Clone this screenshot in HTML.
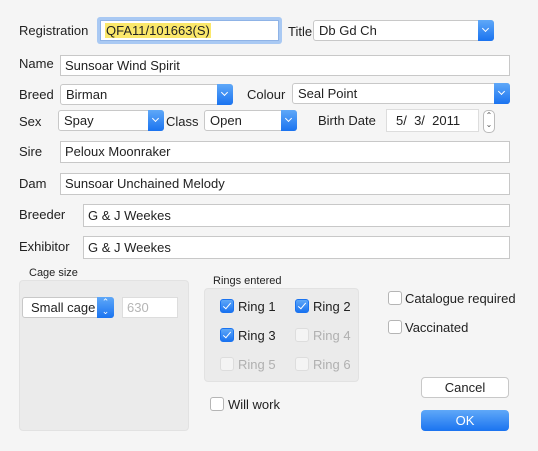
<!DOCTYPE html>
<html><head><style>
body{margin:0;width:538px;height:451px;background:#f5f5f5;font-family:"Liberation Sans",sans-serif;font-size:13px;color:#222;position:relative;overflow:hidden}
.a{position:absolute}
.l{position:absolute;line-height:16px}
.f{position:absolute;background:#fff;border:1px solid #c8c8c8;box-sizing:border-box;padding-left:4px;line-height:19px}
.s{position:absolute;background:#fff;border:1px solid #c8c8c8;border-radius:3px;box-sizing:border-box;padding-left:5px;line-height:20px}
.s .b{position:absolute;right:-1px;top:-1px;bottom:-1px;width:16px;background:linear-gradient(#5fa8f8,#1a73f0);border-radius:0 3px 3px 0}
.s .b.c:after{content:"";position:absolute;left:5px;top:6px;width:4px;height:4px;border-right:1.3px solid #fff;border-bottom:1.3px solid #fff;transform:rotate(45deg)}
.cb{position:absolute;width:14px;height:14px;border:1px solid #b5b5b5;border-radius:3px;background:#fff;box-sizing:border-box}
.cb.on{background:linear-gradient(#5fa8f8,#1a73f0);border-color:#1a73f0}
.cb.on:after{content:"";position:absolute;left:4px;top:1px;width:3px;height:7px;border-right:1.6px solid #fff;border-bottom:1.6px solid #fff;transform:rotate(40deg)}
.cb.dis{border-color:#ddd;background:#f4f4f4}
.dim{color:#b0b0b0}
.box{position:absolute;background:#ebebeb;border:1px solid #e2e2e2;border-radius:4px;box-sizing:border-box}
</style></head><body>
<div class="l" style="left:19px;top:23px">Registration</div>
<div class="a" style="left:97px;top:17px;width:185px;height:27px;border-radius:3px;background:#a9c9f3"></div>
<div class="f" style="left:100px;top:20px;width:179px;height:21px;border-color:#8fb3e6"><span style="background:#fbe86b;padding:0 1px">QFA11/101663(S)</span></div>
<div class="l" style="left:288px;top:24px">Title</div>
<div class="s" style="left:313px;top:20px;width:181px;height:21px">Db Gd Ch<div class="b c"></div></div>

<div class="l" style="left:19px;top:56px">Name</div>
<div class="f" style="left:60px;top:55px;width:450px;height:21px">Sunsoar Wind Spirit</div>

<div class="l" style="left:19px;top:87px">Breed</div>
<div class="s" style="left:60px;top:84px;width:173px;height:21px">Birman<div class="b c"></div></div>
<div class="l" style="left:247px;top:87px">Colour</div>
<div class="s" style="left:292px;top:83px;width:218px;height:21px">Seal Point<div class="b c"></div></div>

<div class="l" style="left:19px;top:114px">Sex</div>
<div class="s" style="left:58px;top:110px;width:106px;height:21px">Spay<div class="b c"></div></div>
<div class="l" style="left:166px;top:114px">Class</div>
<div class="s" style="left:204px;top:110px;width:93px;height:21px">Open<div class="b c"></div></div>
<div class="l" style="left:318px;top:113px">Birth Date</div>
<div class="f" style="left:386px;top:109px;width:93px;height:23px;padding-left:9px;line-height:21px;border-color:#ddd">5/ &nbsp;3/ &nbsp;2011</div>
<div class="a" style="left:483px;top:110px;width:10px;height:21px;border:1px solid #bbb;border-radius:5px;background:#fff;font-size:8px;line-height:9px;text-align:center;color:#555">⌃<br>⌄</div>

<div class="l" style="left:19px;top:144px">Sire</div>
<div class="f" style="left:60px;top:141px;width:450px;height:22px;line-height:20px">Peloux Moonraker</div>
<div class="l" style="left:19px;top:176px">Dam</div>
<div class="f" style="left:60px;top:173px;width:450px;height:22px;line-height:20px">Sunsoar Unchained Melody</div>
<div class="l" style="left:19px;top:207px">Breeder</div>
<div class="f" style="left:83px;top:204px;width:427px;height:23px;line-height:21px">G &amp; J Weekes</div>
<div class="l" style="left:19px;top:239px">Exhibitor</div>
<div class="f" style="left:83px;top:236px;width:427px;height:23px;line-height:21px">G &amp; J Weekes</div>

<div class="l" style="left:29px;top:265px;font-size:11px">Cage size</div>
<div class="box" style="left:19px;top:280px;width:170px;height:151px"></div>
<div class="s" style="left:22px;top:297px;width:92px;height:21px;padding-left:8px">Small cage<div class="b" style="width:17px"></div></div>
<div class="a" style="left:99px;top:298px;color:#fff;font-size:9px;line-height:9px;text-align:center;width:13px">⌃<br>⌄</div>
<div class="f" style="left:122px;top:297px;width:56px;height:21px;border-color:#ddd;color:#b5b5b5">630</div>

<div class="l" style="left:213px;top:273px;font-size:11px">Rings entered</div>
<div class="box" style="left:204px;top:288px;width:155px;height:94px"></div>
<div class="cb on" style="left:220px;top:299px"></div><div class="l" style="left:238px;top:299px">Ring 1</div>
<div class="cb on" style="left:295px;top:299px"></div><div class="l" style="left:313px;top:299px">Ring 2</div>
<div class="cb on" style="left:220px;top:328px"></div><div class="l" style="left:238px;top:328px">Ring 3</div>
<div class="cb dis" style="left:295px;top:328px"></div><div class="l dim" style="left:313px;top:328px">Ring 4</div>
<div class="cb dis" style="left:220px;top:357px"></div><div class="l dim" style="left:238px;top:357px">Ring 5</div>
<div class="cb dis" style="left:295px;top:357px"></div><div class="l dim" style="left:313px;top:357px">Ring 6</div>

<div class="cb" style="left:388px;top:291px"></div><div class="l" style="left:405px;top:291px">Catalogue required</div>
<div class="cb" style="left:388px;top:320px"></div><div class="l" style="left:405px;top:320px">Vaccinated</div>
<div class="cb" style="left:210px;top:397px"></div><div class="l" style="left:228px;top:397px">Will work</div>

<div class="a" style="left:421px;top:377px;width:88px;height:21px;background:#fff;border:1px solid #c8c8c8;border-radius:4px;box-sizing:border-box;text-align:center;line-height:19px">Cancel</div>
<div class="a" style="left:421px;top:410px;width:88px;height:21px;background:linear-gradient(#5fa8f8,#1a73f0);border-radius:4px;text-align:center;line-height:21px;color:#fff">OK</div>
</body></html>
